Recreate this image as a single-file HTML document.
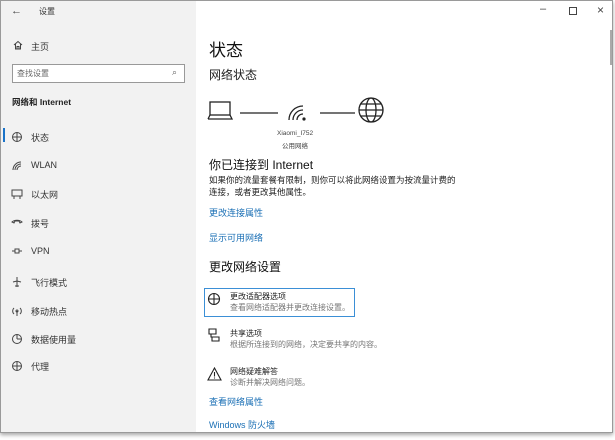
<!DOCTYPE html>
<html><head><meta charset="utf-8"><style>
*{margin:0;padding:0;box-sizing:border-box}
body{width:615px;height:440px;background:#fff;position:relative;overflow:hidden;font-family:"Liberation Sans","Noto Sans CJK SC",sans-serif;color:#222}
.a{position:absolute;white-space:nowrap}
#win{position:absolute;left:0;top:0;width:613px;height:433px;border:1px solid #9a9a9a;background:#fff;box-shadow:0 2px 4px rgba(0,0,0,.35)}
#side{position:absolute;left:1px;top:1px;width:195px;height:431px;background:#f2f2f2}
.it{font-size:9px;color:#333}
.lk{font-size:9px;color:#1a6fb5}
svg{position:absolute}
.ic{fill:none;stroke:#444;stroke-width:1}
</style></head><body>
<div id="win"></div>
<div id="side"></div>
<div class="a" style="left:11px;top:5px;font-size:11px;color:#444">←</div>
<div class="a it" style="left:39px;top:6px;font-size:8px">设置</div>
<div class="a" style="left:540px;top:3px;font-size:11px;color:#444">–</div>
<div style="position:absolute;left:569px;top:7px;width:8px;height:8px;border:1px solid #444"></div>
<div class="a" style="left:597px;top:3px;font-size:12px;color:#444">×</div>
<svg style="left:13px;top:40px" width="10" height="10" viewBox="0 0 10 10"><path d="M1 5L5 1.5L9 5M2.5 4v5h5V4M4 9V6.5h2V9" class="ic"/></svg>
<div class="a it" style="left:31px;top:40px">主页</div>
<div style="position:absolute;left:12px;top:64px;width:173px;height:19px;border:1px solid #999;background:#fff"></div>
<div class="a" style="left:17px;top:68px;font-size:8px;color:#666">查找设置</div>
<div class="a" style="left:172px;top:67px;font-size:9px;color:#666">⌕</div>
<div class="a" style="left:12px;top:96px;font-size:8.5px;font-weight:bold;color:#222">网络和 Internet</div>
<div style="position:absolute;left:3px;top:128px;width:2px;height:14px;background:#1a73c8"></div>
<svg style="left:11px;top:131px" width="12" height="12" viewBox="0 0 12 12"><circle cx="6" cy="6" r="4.5" class="ic"/><path d="M6 1.5v9M1.5 6h9" class="ic"/></svg><div class="a it" style="left:31px;top:131px">状态</div>
<svg style="left:11px;top:160px" width="12" height="12" viewBox="0 0 12 12"><path d="M2 10a8 8 0 0 1 8-8M4 10a6 6 0 0 1 6-6M6 10a4 4 0 0 1 4-4" class="ic"/></svg><div class="a it" style="left:31px;top:160px">WLAN</div>
<svg style="left:11px;top:188px" width="12" height="12" viewBox="0 0 12 12"><path d="M1 2h10v6H1zM3 8v3M9 8v3" class="ic"/></svg><div class="a it" style="left:31px;top:188px">以太网</div>
<svg style="left:11px;top:217px" width="12" height="12" viewBox="0 0 12 12"><path d="M1 5a6 4 0 0 1 10 0l-2 1-1-2H4L3 6z" class="ic"/></svg><div class="a it" style="left:31px;top:217px">拨号</div>
<svg style="left:11px;top:246px" width="12" height="12" viewBox="0 0 12 12"><path d="M1 5h3M8 5h3M4 3v4h4V3z" class="ic"/></svg><div class="a it" style="left:31px;top:246px">VPN</div>
<svg style="left:11px;top:276px" width="12" height="12" viewBox="0 0 12 12"><path d="M6 1v10M2 6l4-1 4 1M4 10h4" class="ic"/></svg><div class="a it" style="left:31px;top:276px">飞行模式</div>
<svg style="left:11px;top:305px" width="12" height="12" viewBox="0 0 12 12"><path d="M3 3a4 4 0 0 0 0 6M9 3a4 4 0 0 1 0 6M6 6v5" class="ic"/><circle cx="6" cy="6" r="1" class="ic"/></svg><div class="a it" style="left:31px;top:305px">移动热点</div>
<svg style="left:11px;top:333px" width="12" height="12" viewBox="0 0 12 12"><circle cx="6" cy="6" r="4.5" class="ic"/><path d="M6 6V1.5M6 6h4.5" class="ic"/></svg><div class="a it" style="left:31px;top:333px">数据使用量</div>
<svg style="left:11px;top:360px" width="12" height="12" viewBox="0 0 12 12"><circle cx="6" cy="6" r="4.5" class="ic"/><path d="M6 1.5v9M1.5 6h9" class="ic"/></svg><div class="a it" style="left:31px;top:360px">代理</div>

<div class="a" style="left:209px;top:36px;font-size:17px;color:#111">状态</div>
<div class="a" style="left:209px;top:66px;font-size:12px;color:#222">网络状态</div>
<svg style="left:205px;top:96px" width="185" height="30" viewBox="0 0 185 30">
<g fill="none" stroke="#222" stroke-width="1.3">
<rect x="5" y="6" width="20" height="13"/><path d="M3 23h24l-2-4M3 23l2-4"/>
<path d="M35 17h38M115 17h35"/>
<path d="M84 24a14 14 0 0 1 14-14M88 24a10 10 0 0 1 10-10M92 24a6 6 0 0 1 6-6"/>
<circle cx="166" cy="14" r="12"/><ellipse cx="166" cy="14" rx="5" ry="12"/><path d="M154 14h24M156 8h20M156 20h20"/>
</g><circle cx="99" cy="23" r="1.6" fill="#222"/></svg>
<div class="a" style="left:277px;top:130px;font-size:6.5px;color:#444">Xiaomi_I752</div>
<div class="a" style="left:282px;top:140px;font-size:6.5px;color:#444">公用网络</div>
<div class="a" style="left:209px;top:156px;font-size:12px;color:#111">你已连接到 Internet</div>
<div class="a" style="left:209px;top:174px;font-size:8.5px;color:#222">如果你的流量套餐有限制，则你可以将此网络设置为按流量计费的</div>
<div class="a" style="left:209px;top:186px;font-size:8.5px;color:#222">连接，或者更改其他属性。</div>
<div class="a lk" style="left:209px;top:206px">更改连接属性</div>
<div class="a lk" style="left:209px;top:231px">显示可用网络</div>
<div class="a" style="left:209px;top:258px;font-size:12px;color:#111">更改网络设置</div>
<div style="position:absolute;left:204px;top:288px;width:151px;height:29px;border:1.5px solid #3b8fd6"></div>
<svg style="left:207px;top:292px" width="14" height="14" viewBox="0 0 14 14"><circle cx="7" cy="7" r="5.5" fill="none" stroke="#222" stroke-width="1.1"/><path d="M7 1.5v11M1.5 7h11" fill="none" stroke="#222" stroke-width="1.1"/></svg>
<div class="a" style="left:230px;top:291px;font-size:8px;color:#222">更改适配器选项</div>
<div class="a" style="left:230px;top:302px;font-size:8px;color:#777">查看网络适配器并更改连接设置。</div>
<svg style="left:207px;top:328px" width="14" height="14" viewBox="0 0 14 14"><path d="M2 1h7v5H2zM4 6v3h8v4H5V9" fill="none" stroke="#222" stroke-width="1.1"/></svg>
<div class="a" style="left:230px;top:328px;font-size:8px;color:#222">共享选项</div>
<div class="a" style="left:230px;top:339px;font-size:8px;color:#777">根据所连接到的网络，决定要共享的内容。</div>
<svg style="left:207px;top:367px" width="15" height="14" viewBox="0 0 15 14"><path d="M7.5 1L14 13H1z" fill="none" stroke="#222" stroke-width="1.1"/><path d="M7.5 5v4.5M7.5 10.5v1" stroke="#222" stroke-width="1.1"/></svg>
<div class="a" style="left:230px;top:366px;font-size:8px;color:#222">网络疑难解答</div>
<div class="a" style="left:230px;top:377px;font-size:8px;color:#777">诊断并解决网络问题。</div>
<div class="a lk" style="left:209px;top:395px">查看网络属性</div>
<div class="a lk" style="left:209px;top:418px">Windows 防火墙</div>
<div style="position:absolute;left:610px;top:30px;width:2px;height:35px;background:#aaa"></div>
</body></html>
